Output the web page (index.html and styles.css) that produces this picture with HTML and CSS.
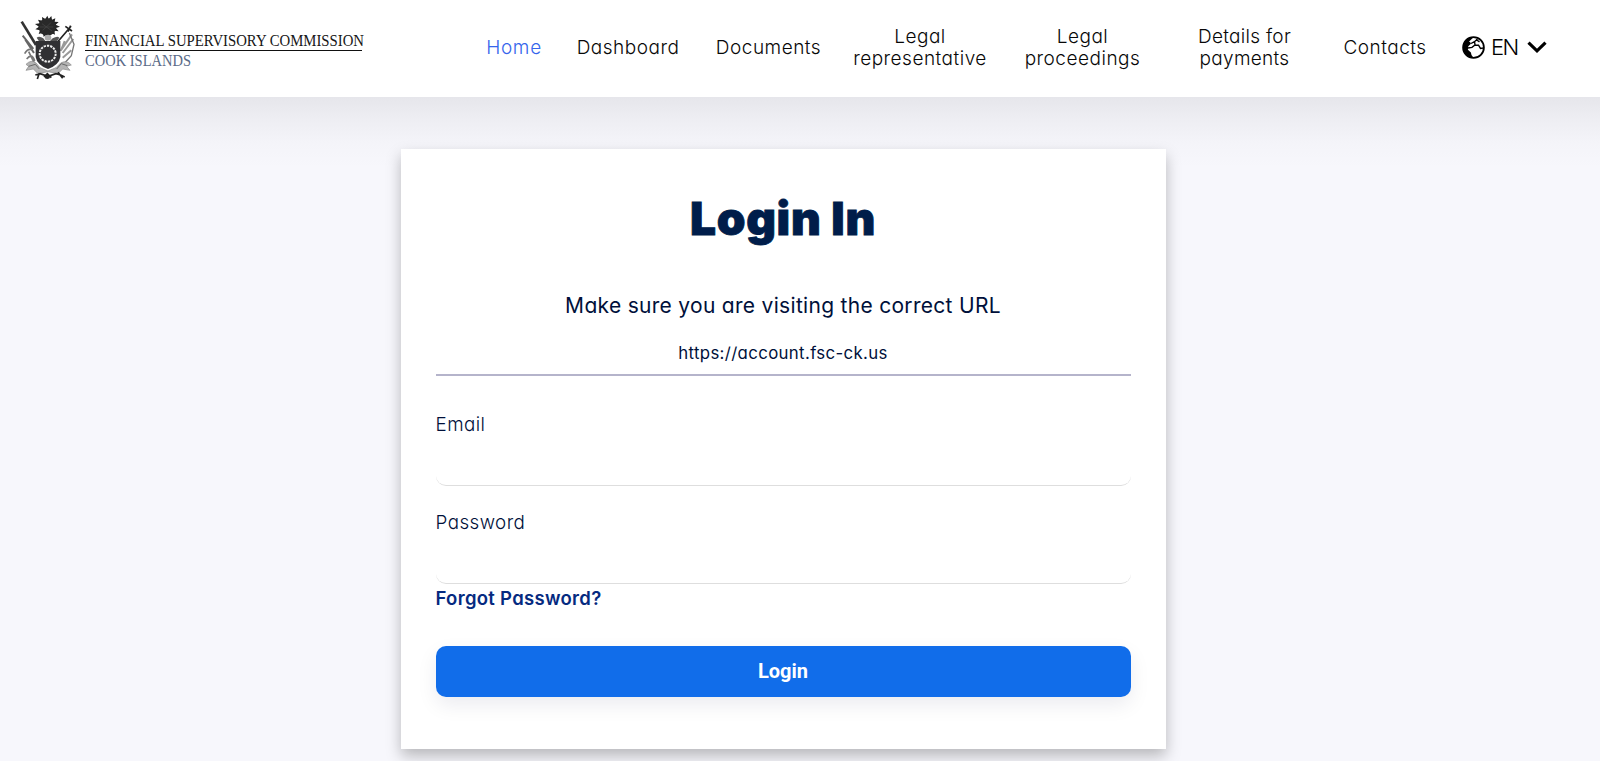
FILE: index.html
```
<!DOCTYPE html>
<html lang="en">
<head>
<meta charset="utf-8">
<title>Login In</title>
<link rel="stylesheet" href="styles.css">
</head>
<body>
<header class="header">
  <svg class="logo" width="380" height="85" viewBox="0 0 380 85">
    <g transform="scale(.33333)">
      <g fill="none" stroke="#333" stroke-width="5">
        <path d="M35 50L78 120" stroke-width="8"/>
        <path d="M38 92L70 132M46 104l26 40" stroke="#666" stroke-width="6"/>
        <path d="M183 64L142 112M166 64l20 14M182 62l-8 18" stroke="#222"/>
        <path d="M44 146q8-16 22-12M50 162q16-20 24 6M56 140l18 36" stroke="#777"/>
        <path d="M154 134l32-46M158 144l32-42M158 158l26-22M164 108l-12 30" stroke="#999" stroke-width="6"/>
        <path d="M178 84l14 34-8 34-20 22" stroke="#777" stroke-width="4"/>
      </g>
      <path d="M112 32l4 10 8-9 2 11 10-4-2 10 12 1-9 8 13 6-12 4 8 10-13-2 2 12-12-6-5 12-7-9-10 10-2-13-13 4 4-11-14-3 11-8-12-8 14-2-5-11 13 3-1-11 10 6z" fill="#222"/>
      <circle cx="112" cy="66" r="26" fill="#292929"/>
      <path d="M96 56l30 22M98 76l26-24M90 66h40" stroke="#484848" stroke-width="2"/>
      <ellipse cx="114" cy="98" rx="10" ry="9" fill="#aaa"/>
      <path d="M80 98q8-6 20 2l6 8h14l8-8q14-8 20-2l-8 12H88z" fill="#555"/>
      <path d="M77 108h74v48q-4 24-37 36-33-12-37-36z" fill="#303033"/>
      <circle cx="113" cy="146" r="24" fill="none" stroke="#eee" stroke-width="6" stroke-dasharray="7 3"/>
      <path d="M48 178q16-16 30-4l12 14 24 10 24-10 14-14q18-10 32 6l-14 4 10 12-22-4-14 14-30-6-30 6-14-14-22 4 8-12z" fill="#b4b4b4" stroke="#888" stroke-width="2"/>
      <path d="M56 184l20-6 12 14M172 182l-18-6-14 16" fill="none" stroke="#666" stroke-width="3"/>
      <path d="M76 210l14-4 24 8 24-8 14 4 12 6M88 204l-6 18M144 202l14 18M102 216l10-10 12 12" fill="none" stroke="#222" stroke-width="5"/>
      <ellipse cx="112" cy="216" rx="8" ry="6" fill="#222"/>
    </g>
    <text class="logo-name" x="75" y="40.5" textLength="279" lengthAdjust="spacingAndGlyphs">FINANCIAL SUPERVISORY COMMISSION</text>
    <rect x="75" y="45" width="277" height="1" fill="#111"/>
    <text class="logo-place" x="75" y="60.5" textLength="106" lengthAdjust="spacingAndGlyphs">COOK ISLANDS</text>
  </svg>
  <nav class="nav">
    <a class="nav-item nav-home">Home</a>
    <a class="nav-item nav-dashboard">Dashboard</a>
    <a class="nav-item nav-documents">Documents</a>
    <a class="nav-item nav-representative">Legal<br>representative</a>
    <a class="nav-item nav-proceedings">Legal<br>proceedings</a>
    <a class="nav-item nav-payments">Details for<br>payments</a>
    <a class="nav-item nav-contacts">Contacts</a>
  </nav>
  <div class="lang">
    <svg class="globe" width="23" height="23" viewBox="0 0 23 23">
      <circle cx="11.5" cy="11.5" r="10.4" fill="#fff" stroke="#000" stroke-width="1.8"/>
      <path d="M11.5 1C5 1 1 6 1 11.5S5.500 22 11.500 22l-2-3-.6-2.400-3-2.800.4-3.600L9 7.800l-.8-1.600L7 5.600l2-1.800z" fill="#000"/>
      <path d="M9 7.500l3.500-1.800 3-2.800M12.500 5.700l.5 3M6 12l4-.6 3-2.400 3.500.2 2 3.200 2.800-.4M14 3.500l3.500 2.300" fill="none" stroke="#000" stroke-width="1.400"/>
    </svg>
    <span class="lang-code">EN</span>
    <svg class="chevron" width="20" height="13" viewBox="0 0 20 13"><path d="M1.500 1.700L10 9.900 18.500 1.700" fill="none" stroke="#000" stroke-width="3.200"/></svg>
  </div>
</header>
<main class="main">
  <form class="card">
    <h1 class="title">Login In</h1>
    <p class="notice">Make sure you are visiting the correct URL</p>
    <p class="url">https://account.fsc-ck.us</p>
    <label class="label label-email">Email</label>
    <input class="field" type="email">
    <label class="label label-password">Password</label>
    <input class="field" type="password">
    <a class="forgot">Forgot Password?</a>
    <button class="submit" type="button">Login</button>
  </form>
</main>
</body>
</html>
```
FILE: styles.css
```
* { box-sizing: border-box; }
body {
  margin: 0;
  height: 761px;
  overflow: hidden;
  background: #f7f7fc;
  font-family: Inter, "Open Sans", sans-serif;
  font-feature-settings: "cv11" 1;
  font-weight: 300;
  color: #00103a;
}
.header {
  display: flex;
  align-items: center;
  height: 97px;
  padding-left: 20px;
  background: #fff;
}
.logo { flex: none; width: 380px; margin: -2px 0 0 -10px; overflow: visible; }
.logo-name, .logo-place { font-family: "Liberation Serif", serif; font-size: 16.6px; font-weight: 400; fill: #161616; }
.logo-place { fill: #5b6b88; }
.nav { display: flex; align-items: center; margin: -2px 0 0 80px; }
.nav-item { text-align: center; font-size: 19px; line-height: 22px; letter-spacing: .5px; color: #080808; }
.nav-home { width: 88px; color: #3565ec; letter-spacing: .7px; }
.nav-dashboard { width: 140px; }
.nav-documents { width: 141px; }
.nav-representative { width: 162px; }
.nav-proceedings { width: 163px; }
.nav-payments { width: 161px; letter-spacing: .3px; }
.nav-contacts { width: 120px; }
.lang { display: flex; align-items: center; margin: -2px 0 0 17px; color: #000; }
.lang-code { width: 28px; margin: -2px 8px 0 6px; font-size: 22px; line-height: 26px; letter-spacing: -1.5px; }
.main {
  height: 664px;
  padding-top: 52px;
  background: linear-gradient(#e6e6eb, #ededf2 20px, #f4f4f9 46px, #f7f7fc 70px);
}
.card {
  width: 764.5px;
  height: 600px;
  margin-left: 401px;
  padding: 36px 35px 0 34.5px;
  background: #fff;
  box-shadow: 0 7px 14px rgba(0, 0, 0, .26);
}
.title {
  margin: 0;
  font-size: 46px;
  line-height: 67px;
  font-weight: 900;
  letter-spacing: .7px;
  text-align: center;
  color: #001d4a;
  -webkit-text-stroke: .9px #001d4a;
}
.notice { margin: 38px 0 0; font-size: 21px; line-height: 32px; font-weight: 400; letter-spacing: .3px; text-align: center; }
.url { margin: 14px 0 0; height: 40px; padding-top: 4px; font-size: 16.8px; line-height: 26px; font-weight: 400; letter-spacing: .36px; text-align: center; border-bottom: 2px solid #b5b4cb; }
.label { display: block; font-size: 18.8px; line-height: 26px; letter-spacing: .45px; }
.label-email { margin-top: 36px; }
.field {
  display: block;
  width: 100%;
  height: 48px;
  margin: 0;
  padding: 0 12px;
  border: 0 solid #dedede;
  border-bottom-width: 1px;
  border-radius: 10px;
  background: #fff;
}
.label-password { margin-top: 24px; }
.forgot { display: block; font-size: 18.5px; line-height: 28px; font-weight: 600; letter-spacing: .3px; color: #052a80; }
.submit {
  display: block;
  width: 100%;
  height: 51px;
  margin-top: 34px;
  padding: 0;
  border: 0;
  border-radius: 10px;
  background: #116dea;
  color: #fff;
  font: 700 20px/49px Roboto, sans-serif;
  box-shadow: 0 8px 20px rgba(10, 10, 60, .08);
}
```
